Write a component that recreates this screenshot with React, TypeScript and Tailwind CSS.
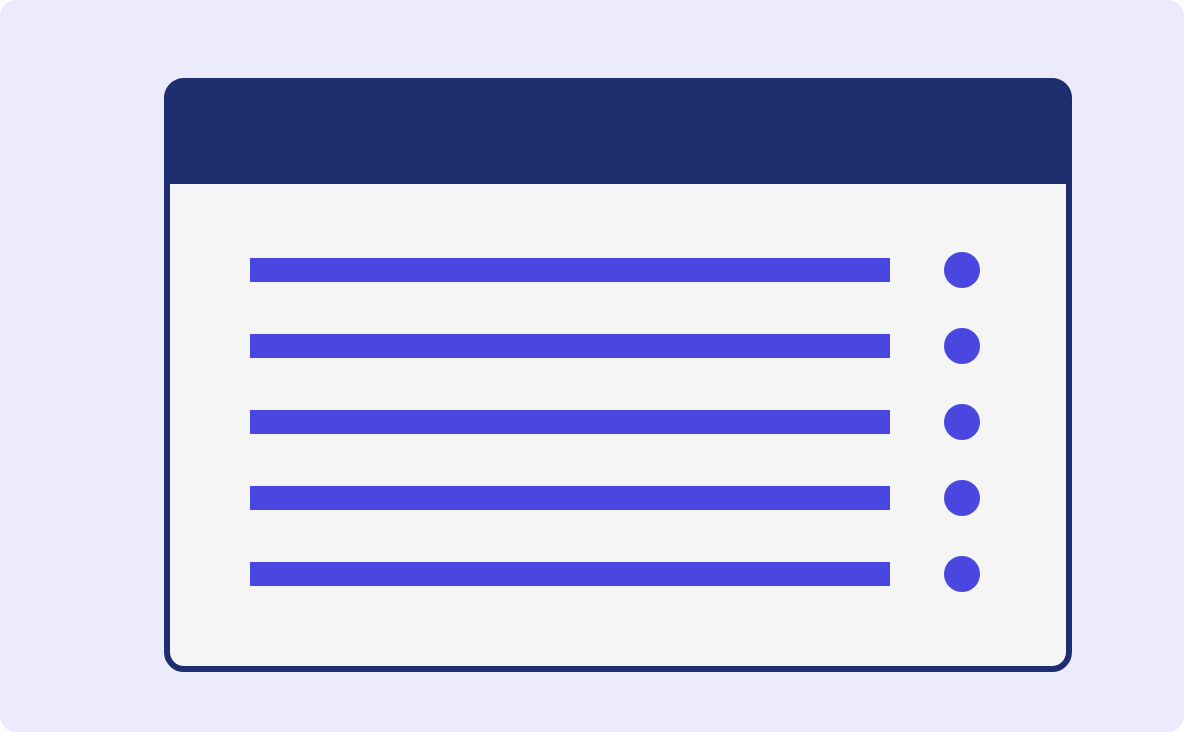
export default function App() {
  const rows = [0, 1, 2, 3, 4]

  return (
    <div className="h-[732px] w-[1184px] bg-white">
      <div className="h-full w-full rounded-2xl bg-[#ebebfc] pl-[164px] pt-[78px]">
        {/* Window card */}
        <div className="flex h-[594px] w-[908px] flex-col rounded-[20px] border-[6px] border-[#1f2e6f] bg-[#1f2e6f]">
          <div className="h-[100px] shrink-0" />
          <div className="flex flex-1 flex-col gap-[40px] rounded-b-[14px] bg-[#f5f5f6] pl-[80px] pt-[68px]">
            {rows.map(i => (
              <div key={i} className="flex items-center gap-[54px]">
                <div className="h-[24px] w-[640px] bg-[#4a47e0]" />
                <div className="h-[36px] w-[36px] rounded-full bg-[#4a47e0]" />
              </div>
            ))}
          </div>
        </div>
      </div>
    </div>
  )
}
